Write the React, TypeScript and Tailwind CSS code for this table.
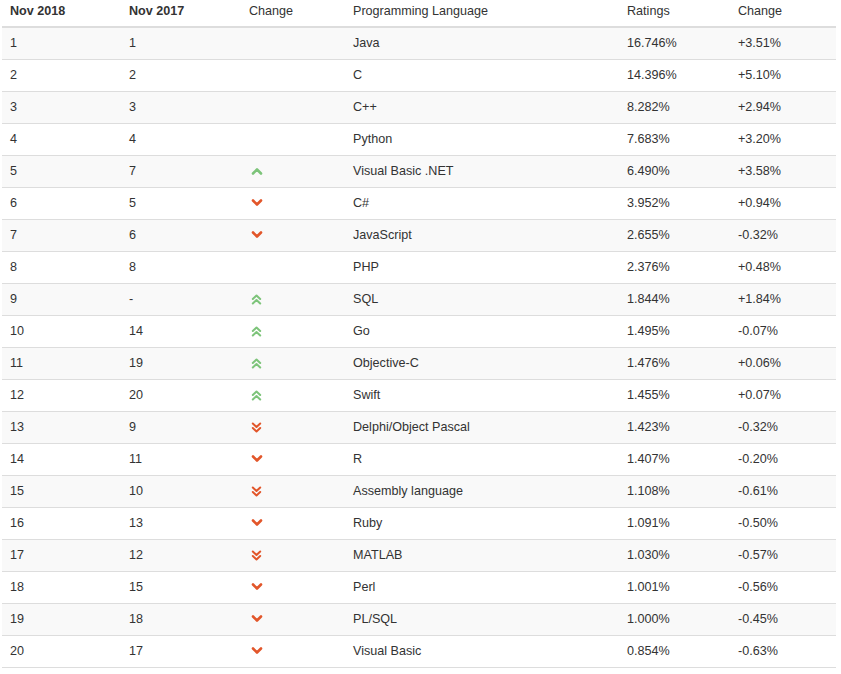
type Trend = "up" | "up2" | "down" | "down2" | null;

type Row = {
  now: string;
  prev: string;
  trend: Trend;
  lang: string;
  rating: string;
  change: string;
};

const ROWS: Row[] = [
  { now: "1", prev: "1", trend: null, lang: "Java", rating: "16.746%", change: "+3.51%" },
  { now: "2", prev: "2", trend: null, lang: "C", rating: "14.396%", change: "+5.10%" },
  { now: "3", prev: "3", trend: null, lang: "C++", rating: "8.282%", change: "+2.94%" },
  { now: "4", prev: "4", trend: null, lang: "Python", rating: "7.683%", change: "+3.20%" },
  { now: "5", prev: "7", trend: "up", lang: "Visual Basic .NET", rating: "6.490%", change: "+3.58%" },
  { now: "6", prev: "5", trend: "down", lang: "C#", rating: "3.952%", change: "+0.94%" },
  { now: "7", prev: "6", trend: "down", lang: "JavaScript", rating: "2.655%", change: "-0.32%" },
  { now: "8", prev: "8", trend: null, lang: "PHP", rating: "2.376%", change: "+0.48%" },
  { now: "9", prev: "-", trend: "up2", lang: "SQL", rating: "1.844%", change: "+1.84%" },
  { now: "10", prev: "14", trend: "up2", lang: "Go", rating: "1.495%", change: "-0.07%" },
  { now: "11", prev: "19", trend: "up2", lang: "Objective-C", rating: "1.476%", change: "+0.06%" },
  { now: "12", prev: "20", trend: "up2", lang: "Swift", rating: "1.455%", change: "+0.07%" },
  { now: "13", prev: "9", trend: "down2", lang: "Delphi/Object Pascal", rating: "1.423%", change: "-0.32%" },
  { now: "14", prev: "11", trend: "down", lang: "R", rating: "1.407%", change: "-0.20%" },
  { now: "15", prev: "10", trend: "down2", lang: "Assembly language", rating: "1.108%", change: "-0.61%" },
  { now: "16", prev: "13", trend: "down", lang: "Ruby", rating: "1.091%", change: "-0.50%" },
  { now: "17", prev: "12", trend: "down2", lang: "MATLAB", rating: "1.030%", change: "-0.57%" },
  { now: "18", prev: "15", trend: "down", lang: "Perl", rating: "1.001%", change: "-0.56%" },
  { now: "19", prev: "18", trend: "down", lang: "PL/SQL", rating: "1.000%", change: "-0.45%" },
  { now: "20", prev: "17", trend: "down", lang: "Visual Basic", rating: "0.854%", change: "-0.63%" },
];

// petites flèches façon font-awesome, dessinées à la main
function TrendIcon({ trend }: { trend: Trend }) {
  if (!trend) return null;
  const up = trend === "up" || trend === "up2";
  const color = up ? "#7dc47a" : "#e2562a";
  if (trend === "up" || trend === "down") {
    return (
      <svg width="12" height="8" viewBox="0 0 12 8" className="ml-[2px] inline-block">
        <polyline
          points={up ? "2,6.5 6,2.5 10,6.5" : "2,1.5 6,5.5 10,1.5"}
          fill="none"
          stroke={color}
          strokeWidth="2.6"
          strokeLinecap="round"
          strokeLinejoin="round"
        />
      </svg>
    );
  }
  return (
    <svg width="11" height="11" viewBox="0 0 11 11" className="ml-[2px] inline-block">
      <g fill="none" stroke={color} strokeWidth="2" strokeLinecap="round" strokeLinejoin="round">
        {up ? (
          <>
            <polyline points="1.8,5 5.5,1.5 9.2,5" />
            <polyline points="1.8,9.5 5.5,6 9.2,9.5" />
          </>
        ) : (
          <>
            <polyline points="1.8,1.5 5.5,5 9.2,1.5" />
            <polyline points="1.8,6 5.5,9.5 9.2,6" />
          </>
        )}
      </g>
    </svg>
  );
}

export default function App() {
  return (
    <div className="min-h-screen bg-white pl-[2px] font-['Liberation_Sans',Arial,sans-serif] text-[12.6px] text-[#333]">
      <table className="w-[834px] table-fixed border-collapse">
        <colgroup>
          <col className="w-[119px]" />
          <col className="w-[120px]" />
          <col className="w-[104px]" />
          <col className="w-[274px]" />
          <col className="w-[111px]" />
          <col className="w-[106px]" />
        </colgroup>
        <thead>
          <tr className="h-[27px] border-b-2 border-[#ddd] text-left">
            <th className="px-2 pb-[5px] align-bottom font-bold">Nov 2018</th>
            <th className="px-2 pb-[5px] align-bottom font-bold">Nov 2017</th>
            <th className="px-2 pb-[5px] align-bottom font-normal">Change</th>
            <th className="px-2 pb-[5px] align-bottom font-normal">Programming Language</th>
            <th className="px-2 pb-[5px] align-bottom font-normal">Ratings</th>
            <th className="px-2 pb-[5px] align-bottom font-normal">Change</th>
          </tr>
        </thead>
        <tbody>
          {ROWS.map((r, i) => (
            <tr
              key={r.now}
              className={`h-[32px] border-b border-[#ddd] ${i % 2 === 0 ? "bg-[#f9f9f9]" : "bg-white"}`}
            >
              <td className="px-2 align-middle">{r.now}</td>
              <td className="px-2 align-middle">{r.prev}</td>
              <td className="px-2 align-middle leading-none">
                <TrendIcon trend={r.trend} />
              </td>
              <td className="px-2 align-middle">{r.lang}</td>
              <td className="px-2 align-middle">{r.rating}</td>
              <td className="px-2 align-middle">{r.change}</td>
            </tr>
          ))}
        </tbody>
      </table>
    </div>
  );
}
